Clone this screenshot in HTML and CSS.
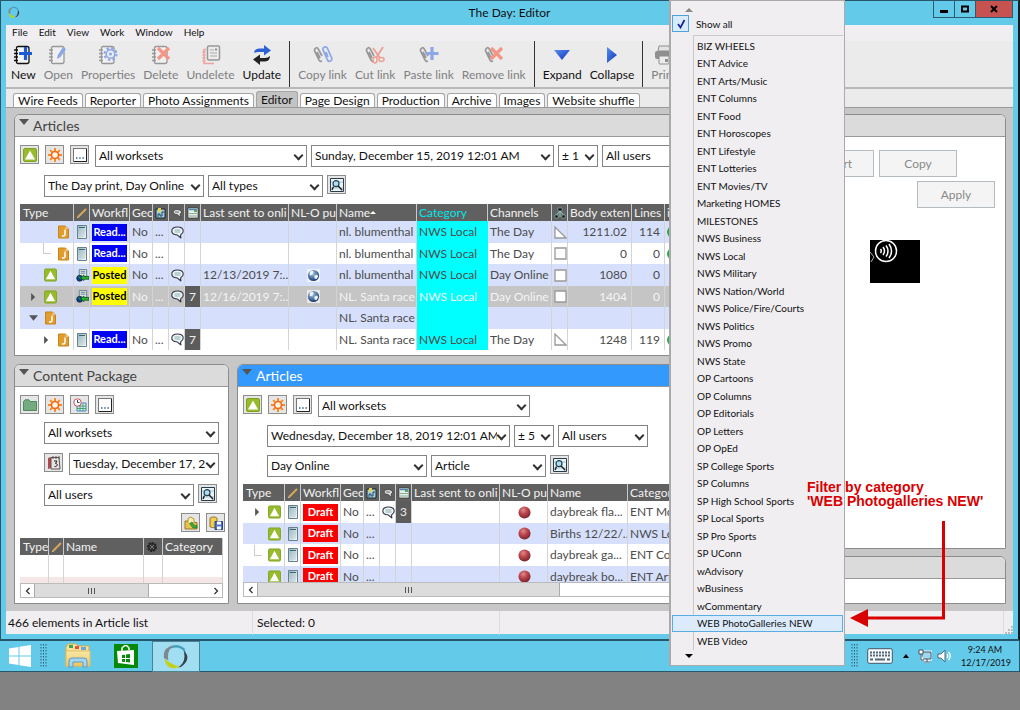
FILE: index.html
```html
<!DOCTYPE html>
<html lang="en">
<head>
	<meta charset="UTF-8">
	<meta name="viewport" content="width=device-width, initial-scale=1.0">
	<title>The Day: Editor</title>
	<link rel="stylesheet" href="styles.css">
</head>
<body>
	<!-- Icon sprite -->
	<svg class="sprite" aria-hidden="true">
		<defs>
			<linearGradient id="page-fill" x1="0" y1="0" x2="1" y2="1"><stop offset="0" stop-color="#8fb4c0"/><stop offset="1" stop-color="#fff"/></linearGradient>
			<radialGradient id="globe-fill" cx=".4" cy=".3" r=".7"><stop offset="0" stop-color="#a9cbe8"/><stop offset="1" stop-color="#16396f"/></radialGradient>
			<radialGradient id="ball-fill" cx=".4" cy=".3" r=".7"><stop offset="0" stop-color="#e08a88"/><stop offset=".5" stop-color="#b8434a"/><stop offset="1" stop-color="#7d2530"/></radialGradient>
			<linearGradient id="blue-fill" x1="0" y1="0" x2="1" y2="1"><stop offset="0" stop-color="#5b8df0"/><stop offset="1" stop-color="#0c35b8"/></linearGradient>
			<linearGradient id="folder-fill" x1="0" y1="0" x2="0" y2="1"><stop offset="0" stop-color="#f8e9a8"/><stop offset="1" stop-color="#eec65c"/></linearGradient>
		</defs>
		<symbol id="article" viewBox="0 0 14 14"><rect x=".5" y=".5" width="13" height="13" rx="1.5" fill="#97bb2d" stroke="#7fa31c"/><path d="M7 2.5 12 11.5H2z" fill="#fff"/></symbol>
		<symbol id="sun" viewBox="0 0 16 16"><g stroke="#f98b1d" stroke-width="2.2"><path d="M8 0v16M0 8h16M2.4 2.4l11.2 11.2M13.6 2.4 2.4 13.6"/></g><circle cx="8" cy="8" r="4" fill="#fdf3df" stroke="#f4661b" stroke-width="1.8"/></symbol>
		<symbol id="dots" viewBox="0 0 14 14"><rect x=".5" y=".5" width="13" height="13" fill="#fff" stroke="#777"/><path d="M13.5 1v12.5H1" fill="none" stroke="#222"/><path d="M3 10h1.5M6.2 10h1.5M9.4 10h1.5" stroke="#2b6a94" stroke-width="1.5"/></symbol>
		<symbol id="find" viewBox="0 0 14 14"><path d="M.5 .5h13v13H.5z" fill="#eaf4f8" stroke="#2a3d4a"/><path d="M1 4h12M1 10h12" stroke="#9fc1cf"/><circle cx="6" cy="5.7" r="3" fill="#b5dcea" stroke="#1e4258" stroke-width="1.2"/><path d="m8.2 8 4 4.3M3.5 8.5 2 12" stroke="#222" stroke-width="1.4"/></symbol>
		<symbol id="green-folder" viewBox="0 0 14 14"><path d="M.5 3.5 2 1.8h4l1 1.7h6.5v9H.5z" fill="#74ab80" stroke="#4e8a5d"/></symbol>
		<symbol id="schedule" viewBox="0 0 14 14"><path d="M4 5h9v8H4z" fill="#d8ecf7" stroke="#3587b5"/><path d="M4 8h9M4 10.5h9M7 6v7M10 6v7" stroke="#4da06e"/><circle cx="4.5" cy="4.5" r="3.7" fill="#fff" stroke="#d25261"/><path d="M4.500 2v2.500h2" fill="none" stroke="#345"/></symbol>
		<symbol id="calendar" viewBox="0 0 14 14"><path d="M1 2 4 1v11l-3 1z" fill="#b1484b"/><path d="M4 1.500h8l1 11.500H4z" fill="#e9e4e1" stroke="#555"/><path d="M6 0v3M9 0v3M12 0v3" stroke="#555"/><path d="M7 5h3L8.500 7.500c3 0 2 3.500-1 3" fill="none" stroke="#222"/></symbol>
		<symbol id="folder-up" viewBox="0 0 14 14"><path d="M1 5h4l1 1.500h7V13H1z" fill="#e9c34b" stroke="#99772a"/><path d="M4 7V2.500L6.500 1 10 3v4" fill="#fff0b0" stroke="#b89032"/><path d="M5.500 7.500 9 12h4V9l-2 1-3-4z" fill="#3ba83c" stroke="#1d7422" stroke-width=".6"/></symbol>
		<symbol id="save-query" viewBox="0 0 14 14"><path d="M1 2.500c0-2 7-2 7 0v8c0 1.500-7 1.500-7 0z" fill="#f0cd4e" stroke="#8c7130"/><path d="M6 5.500h7.500v8H6z" fill="#4d72c8" stroke="#26427f"/><path d="M8 5.500h4v3H8zM8 10.500h4v3H8z" fill="#fff"/></symbol>
		<symbol id="job" viewBox="0 0 12 14"><path d="M1 1h7l3 3v9H1z" fill="#e19c2e" stroke="#c98317"/><path d="M8 1v3h3" fill="#fff" opacity=".5"/><path d="M7.500 4.500v5q-.2 2-3 1.300" fill="none" stroke="#fff" stroke-width="1.500"/></symbol>
		<symbol id="page" viewBox="0 0 10 14"><path d="M.5 .5h9v13h-9z" fill="url(#page-fill)" stroke="#66808a"/><path d="M2 2.500h6" stroke="#3e6270"/><path d="M2 5h6M2 7h6M2 9h6M2 11h6" stroke="#a9bcc2" stroke-width=".6"/></symbol>
		<symbol id="sent" viewBox="0 0 14 14"><path d="M3.500 .5h8v8h-8z" fill="#dbe4e7" stroke="#66808a"/><path d="M5 2.500h5M5 4.500h5" stroke="#62808c"/><circle cx="4" cy="10" r="3.300" fill="#0a3c8a" stroke="#111" stroke-width=".6"/><path d="M2 9c2-2 2 1 3 2" stroke="#2fa75b" fill="none"/><path d="m5 9.500 3.500-3V8H14v3H8.500v1.500z" fill="#27b833" stroke="#064b0b" stroke-width=".8"/></symbol>
		<symbol id="bubble" viewBox="0 0 13 13"><path d="M6.500 1C3 1 .8 2.500.8 5S3 8.600 5.500 8.800c1 .2 2 1 4.500 3.400-.5-1.500-.6-2.700-.1-3.700 1.500-.8 2.300-2 2.300-3.500C12.200 2.500 10 1 6.500 1z" fill="#eef8fa" stroke="#334" stroke-width="1.100"/><path d="M3.500 4h6M3.500 6h6" stroke="#8aa"/></symbol>
		<symbol id="globe" viewBox="0 0 14 14"><path d="M0 0h14v14H0z" fill="#fff" opacity=".6"/><circle cx="7" cy="7" r="6" fill="url(#globe-fill)"/><path d="M3 3q3-2 4 0l-1 3-3 1zM8 7l3-1 1 2-2 3-2-1z" fill="#eef5fa"/></symbol>
		<symbol id="ball" viewBox="0 0 14 14"><circle cx="7" cy="7" r="6.500" fill="url(#ball-fill)"/></symbol>
		<symbol id="square" viewBox="0 0 13 13"><path d="M1 1h11v11H1z" fill="#fff" stroke="#999" stroke-width="1.300"/></symbol>
		<symbol id="corner" viewBox="0 0 13 13"><path d="M1 1v11h11z" fill="#fff" stroke="#999" stroke-width="1.300"/></symbol>
		<symbol id="pencil" viewBox="0 0 12 12"><path d="M2 10 10 2" stroke="#d8a65a" stroke-width="2"/><path d="m1 11 1.600-.6-1-1z" fill="#f3e5c9"/></symbol>
		<symbol id="picture" viewBox="0 0 12 12"><path d="M1 2h9v9H1z" fill="#a7cfe0" stroke="#16242c"/><path d="M3 1h3v4H3z" fill="#e7d34b"/><path d="M3 10V7h2v2h2V5h2" stroke="#1b4b66" fill="none"/></symbol>
		<symbol id="note" viewBox="0 0 12 12"><path d="M6 2.500C1 2.500 1 7.500 6 7.500l4 3-1-3.500C12 5.500 10 2.500 6 2.500z" fill="#ddd" stroke="#222" stroke-width=".6"/><path d="M4 5h4" stroke="#666"/></symbol>
		<symbol id="sheet" viewBox="0 0 12 12"><path d="M1 1h10v10H1z" fill="#e8efe9" stroke="#222" stroke-width=".6"/><path d="M2 2.500h8" stroke="#4b88c0" stroke-width="1.500"/><path d="M7 3h3v2H7z" fill="#5ca75b"/><path d="M2 6.500h8M2 9h8" stroke="#8a9"/></symbol>
		<symbol id="tree" viewBox="0 0 12 12"><path d="M4 1h4v3H4zM1 8h3v3H1zM8 8h3v3H8z" fill="#111" stroke="#9bd0cc" stroke-width=".5"/><path d="M6 4 2.500 8M6 4l3.500 4M6 4v6" stroke="#9bd0cc" fill="none"/></symbol>
		<symbol id="cog" viewBox="0 0 12 12"><circle cx="6" cy="6" r="4" fill="#333" stroke="#222" stroke-width="2" stroke-dasharray="2 1"/><path d="m4 4 4 4M8 4 4 8" stroke="#777"/></symbol>
		<symbol id="right" viewBox="0 0 8 10"><path d="M1 0 6 5 1 10z" fill="#555"/></symbol>
		<symbol id="down" viewBox="0 0 10 6"><path d="M0 0h10L5 6z" fill="#555"/></symbol>

		<!-- Toolbar -->
		<symbol id="notebook" viewBox="0 0 20 20"><path d="M5 1.500h9q2 0 2 2v13q0 2-2 2H5q-1.500 0-1.500-1.500v-14Q3.500 1.500 5 1.500z" fill="#f5f5f5" stroke="currentColor" stroke-width="1.300"/><path d="M1 5h4M1 8.500h4M1 12h4M1 15.500h4" stroke="currentColor" stroke-width="1.500"/></symbol>
		<symbol id="link" viewBox="0 0 20 20"><g fill="none" stroke="currentColor" stroke-width="1.700"><path d="M9 11 5.500 4.500Q4.500 2 3 3 .8 4 1.800 6.500l4 8q1 2.500 3.200 1.500M4 7l3 6"/></g></symbol>
		<symbol id="new" viewBox="0 0 20 20"><use href="#notebook"/><path d="M12.500 2v13M6 8.500h13" stroke="#1c5ad6" stroke-width="3.200"/></symbol>
		<symbol id="open" viewBox="0 0 20 20"><use href="#notebook"/><path d="m9 14 .8-4L15 2l3 2-5.500 8z" fill="#3f70df"/></symbol>
		<symbol id="props" viewBox="0 0 20 20"><use href="#notebook"/><circle cx="12.500" cy="9" r="6" fill="none" stroke="#3f70df" stroke-width="2" stroke-dasharray="2.500 2.200"/><circle cx="12.500" cy="9" r="4.300" fill="#e8edf8" stroke="#3f70df" stroke-width="1.500"/><circle cx="12.500" cy="9" r="1.500" fill="#3f70df"/></symbol>
		<symbol id="delete" viewBox="0 0 20 20"><use href="#notebook"/><path d="m7 3 11 11M18 3 7 14" stroke="#fa5238" stroke-width="3.200"/></symbol>
		<symbol id="undelete" viewBox="0 0 20 20"><path d="M5 4.500H3v14h10" fill="none" stroke="#f06a62" stroke-width="1.500"/><path d="M1 7h4M1 10h4M1 13h4M1 16h4" stroke="#f06a62"/><rect x="6.500" y="1" width="12" height="14" rx="1.500" fill="#eee" stroke="#555" stroke-width="1.500"/><path d="M9 5h4M9 8h7M9 11h7" stroke="#777"/><path d="M14 3.500h2v2h-2z" fill="#444"/></symbol>
		<symbol id="update" viewBox="0 0 20 20"><path d="M2 8Q2 4 7 3.500h5V0l7 5.500-7 5V7H7Q4 7 2 8z" fill="#2c62d4"/><path d="M18 11q0 5-5 5.500H8V20l-7-5.500 7-5V13h5q3 0 5-2z" fill="#222"/></symbol>
		<symbol id="copylink" viewBox="0 0 20 20"><use href="#link"/><g fill="none" stroke="#3f70df" stroke-width="1.700"><path d="m13 11-3-6Q9.500 3 11.500 2q2-.8 3 1.500l4 9q1 2.500-1 3.500t-3-1l-3-6.500M15 12l-2-5"/></g></symbol>
		<symbol id="cutlink" viewBox="0 0 20 20"><use href="#link"/><path d="m8 3 7 10M18 2l-7 11" stroke="#f4604c" stroke-width="1.800"/><ellipse cx="10" cy="15" rx="2" ry="3" fill="none" stroke="#f4604c" stroke-width="1.500"/><ellipse cx="16.500" cy="14.500" rx="2.500" ry="2" fill="none" stroke="#f4604c" stroke-width="1.500"/></symbol>
		<symbol id="pastelink" viewBox="0 0 20 20"><use href="#link"/><path d="M13 2v13M6.500 8.500h13" stroke="#3f70df" stroke-width="3.200"/></symbol>
		<symbol id="removelink" viewBox="0 0 20 20"><use href="#link"/><path d="m7 3 11 11M18 3 7 14" stroke="#fa5238" stroke-width="3.200"/></symbol>
		<symbol id="expand" viewBox="0 0 20 20"><path d="M2 5h16l-8 10z" fill="url(#blue-fill)"/></symbol>
		<symbol id="collapse" viewBox="0 0 20 20"><path d="M5 2v16l10-8z" fill="url(#blue-fill)"/></symbol>
		<symbol id="print" viewBox="0 0 20 20"><path d="M5 1h10l1 5H4z" fill="#ddd" stroke="#444"/><rect x="1" y="6" width="18" height="8" rx="2" fill="#444"/><rect x="5" y="11" width="10" height="8" rx="1" fill="#eee" stroke="#444"/><path d="M11 14h3v3h-3z" fill="#444"/></symbol>
		<symbol id="ring" viewBox="0 0 24 24"><path d="M5 6Q12-2 20 5l1 4Q14 1 5 6z" fill="#459fbd"/><path d="M19 7q8 7-2 15l-3 .5Q22 17 19 7z" fill="#37404b"/><path d="M1 14q4 4 14 8Q4 27 1 14z" fill="#c3d218"/><path d="M1 14Q-1 4 11 1.500 3 6 5 16z" fill="#7e8890"/></symbol>
		<symbol id="grip" viewBox="0 0 7 24"><path d="M1 0v24M3.500 0v24M6 0v24" stroke="#2c5e74" stroke-dasharray="1.500 1.500"/></symbol>
	</svg>

	<div class="window">
		<header class="titlebar">
			<svg class="logo"><use href="#ring"/></svg>
			<h1>The Day: Editor</h1>
			<div class="controls">
				<button aria-label="Minimize"><svg viewBox="0 0 10 10"><path d="M1 7.500h8" stroke="#000" stroke-width="3"/></svg></button>
				<button aria-label="Maximize"><svg viewBox="0 0 10 10"><path d="M2 2.500h6v5H2z" fill="none" stroke="#000" stroke-width="2"/></svg></button>
				<button class="close" aria-label="Close"><svg viewBox="0 0 10 10"><path d="m2 2 6 6M8 2 2 8" stroke="#000" stroke-width="2"/></svg></button>
			</div>
		</header>

		<main class="client">
			<nav class="menubar">
				<a href="#">File</a>
				<a href="#">Edit</a>
				<a href="#">View</a>
				<a href="#">Work</a>
				<a href="#">Window</a>
				<a href="#">Help</a>
			</nav>

			<div class="toolbar">
				<button><svg><use href="#new"/></svg>New</button>
				<button disabled><svg><use href="#open"/></svg>Open</button>
				<button disabled><svg><use href="#props"/></svg>Properties</button>
				<button disabled><svg><use href="#delete"/></svg>Delete</button>
				<button disabled><svg><use href="#undelete"/></svg>Undelete</button>
				<button><svg><use href="#update"/></svg>Update</button>
				<hr>
				<button disabled><svg><use href="#copylink"/></svg>Copy link</button>
				<button disabled><svg><use href="#cutlink"/></svg>Cut link</button>
				<button disabled><svg><use href="#pastelink"/></svg>Paste link</button>
				<button disabled><svg><use href="#removelink"/></svg>Remove link</button>
				<hr>
				<button><svg><use href="#expand"/></svg>Expand</button>
				<button><svg><use href="#collapse"/></svg>Collapse</button>
				<hr>
				<button disabled><svg><use href="#print"/></svg>Print</button>
			</div>

			<div class="tabs">
				<button>Wire Feeds</button>
				<button>Reporter</button>
				<button>Photo Assignments</button>
				<button class="active">Editor</button>
				<button>Page Design</button>
				<button>Production</button>
				<button>Archive</button>
				<button>Images</button>
				<button>Website shuffle</button>
			</div>

			<div class="workspace">
				<div class="left">
					<section class="panel top">
						<h2><svg><use href="#down"/></svg>Articles</h2>
						<div class="filters">
							<div class="row">
								<button class="tool" aria-label="Articles"><svg><use href="#article"/></svg></button>
								<button class="tool" aria-label="Highlight"><svg><use href="#sun"/></svg></button>
								<button class="tool" aria-label="More"><svg><use href="#dots"/></svg></button>
								<span class="drop workset"><select aria-label="Workset"><option>All worksets</option></select></span>
								<span class="drop date"><select aria-label="Date"><option>Sunday, December 15, 2019 12:01 AM</option></select></span>
								<span class="drop days"><select aria-label="Days"><option>± 1</option></select></span>
								<span class="drop users"><select aria-label="Users"><option>All users</option></select></span>
							</div>
							<div class="row indent">
								<span class="drop channel"><select aria-label="Channel"><option>The Day print, Day Online</option></select></span>
								<span class="drop type"><select aria-label="Type"><option>All types</option></select></span>
								<button class="tool" aria-label="Search"><svg><use href="#find"/></svg></button>
							</div>
						</div>
						<div class="grid">
							<table class="wide">
								<colgroup>
									<col class="c-type"><col class="c-icon"><col class="c-flow"><col class="c-geo"><col class="c-icon"><col class="c-icon"><col class="c-icon"><col class="c-sent"><col class="c-pub"><col class="c-name"><col class="c-cat"><col class="c-chan"><col class="c-icon"><col class="c-body"><col class="c-lines"><col>
								</colgroup>
								<thead>
									<tr><th>Type</th><th><svg><use href="#pencil"/></svg></th><th>Workfl</th><th>Geo</th><th><svg><use href="#picture"/></svg></th><th><svg><use href="#note"/></svg></th><th><svg><use href="#sheet"/></svg></th><th>Last sent to onli</th><th>NL-O pu</th><th>Name<i class="sort"></i></th><th class="hot">Category</th><th>Channels</th><th><svg><use href="#tree"/></svg></th><th>Body exten</th><th>Lines</th><th>i</th></tr>
								</thead>
								<tbody>
									<tr><td><span class="node deep"><svg class="ico"><use href="#job"/></svg></span></td><td><svg class="doc"><use href="#page"/></svg></td><td><b class="ready">Read...</b></td><td>No</td><td>...</td><td><svg><use href="#bubble"/></svg></td><td></td><td></td><td></td><td>nl. blumenthal</td><td class="cat">NWS Local</td><td>The Day</td><td><svg><use href="#corner"/></svg></td><td class="num">1211.02</td><td class="num">114</td><td><i class="dot"></i></td></tr>
									<tr><td><span class="node deep elbow"><svg class="ico"><use href="#job"/></svg></span></td><td><svg class="doc"><use href="#page"/></svg></td><td><b class="ready">Read...</b></td><td>No</td><td>...</td><td></td><td></td><td></td><td></td><td>nl. blumenthal</td><td class="cat">NWS Local</td><td>The Day</td><td><svg><use href="#square"/></svg></td><td class="num">0</td><td class="num">0</td><td><i class="dot"></i></td></tr>
									<tr><td><span class="node"><svg class="ico"><use href="#article"/></svg></span></td><td><svg><use href="#sent"/></svg></td><td><b class="posted">Posted</b></td><td>No</td><td>...</td><td><svg><use href="#bubble"/></svg></td><td></td><td>12/13/2019 7:...</td><td class="mid"><svg><use href="#globe"/></svg></td><td>nl. blumenthal</td><td class="cat">NWS Local</td><td>Day Online</td><td><svg><use href="#square"/></svg></td><td class="num">1080</td><td class="num">0</td><td></td></tr>
									<tr class="selected"><td><span class="node"><svg class="arrow"><use href="#right"/></svg><svg class="ico"><use href="#article"/></svg></span></td><td><svg><use href="#sent"/></svg></td><td><b class="posted">Posted</b></td><td>No</td><td>...</td><td><svg><use href="#bubble"/></svg></td><td class="count">7</td><td>12/16/2019 7:...</td><td class="mid"><svg><use href="#globe"/></svg></td><td>NL. Santa race</td><td class="cat">NWS Local</td><td>Day Online</td><td><svg><use href="#square"/></svg></td><td class="num">1404</td><td class="num">0</td><td></td></tr>
									<tr><td><span class="node"><svg class="arrow"><use href="#down"/></svg><svg class="ico"><use href="#job"/></svg></span></td><td></td><td></td><td></td><td></td><td></td><td></td><td></td><td></td><td>NL. Santa race</td><td class="cat"></td><td></td><td></td><td></td><td></td><td></td></tr>
									<tr><td><span class="node deep"><svg class="arrow"><use href="#right"/></svg><svg class="ico"><use href="#job"/></svg></span></td><td><svg class="doc"><use href="#page"/></svg></td><td><b class="ready">Read...</b></td><td>No</td><td>...</td><td><svg><use href="#bubble"/></svg></td><td class="count">7</td><td></td><td></td><td>NL. Santa race</td><td class="cat">NWS Local</td><td>The Day</td><td><svg><use href="#corner"/></svg></td><td class="num">1248</td><td class="num">119</td><td><i class="dot"></i></td></tr>
								</tbody>
							</table>
						</div>
					</section>

					<div class="bottom">
						<section class="panel package">
							<h2><svg><use href="#down"/></svg>Content Package</h2>
							<div class="filters">
								<div class="row short">
									<button class="tool" aria-label="Packages"><svg><use href="#green-folder"/></svg></button>
									<button class="tool" aria-label="Highlight"><svg><use href="#sun"/></svg></button>
									<button class="tool" aria-label="Schedule"><svg><use href="#schedule"/></svg></button>
									<button class="tool" aria-label="More"><svg><use href="#dots"/></svg></button>
								</div>
								<div class="row indent">
									<span class="drop fill"><select aria-label="Workset"><option>All worksets</option></select></span>
								</div>
								<div class="row indent">
									<button class="tool" aria-label="Calendar"><svg><use href="#calendar"/></svg></button>
									<span class="drop fill"><select aria-label="Date"><option>Tuesday, December 17, 2</option></select></span>
								</div>
								<div class="row indent">
									<span class="drop fill"><select aria-label="Users"><option>All users</option></select></span>
									<button class="tool" aria-label="Search"><svg><use href="#find"/></svg></button>
								</div>
								<div class="row short end">
									<button class="tool" aria-label="Import"><svg><use href="#folder-up"/></svg></button>
									<button class="tool" aria-label="Save query"><svg><use href="#save-query"/></svg></button>
								</div>
							</div>
							<div class="grid">
								<table>
									<colgroup><col class="p-type"><col class="p-icon"><col class="p-name"><col class="p-gear"><col></colgroup>
									<thead>
										<tr><th>Type</th><th><svg><use href="#pencil"/></svg></th><th>Name</th><th><svg><use href="#cog"/></svg></th><th>Category</th></tr>
									</thead>
									<tbody class="blank">
										<tr><td></td><td></td><td></td><td></td><td></td></tr>
										<tr><td></td><td></td><td></td><td></td><td></td></tr>
									</tbody>
								</table>
							</div>
							<div class="scroll">
								<button aria-label="Scroll left"><svg viewBox="0 0 8 8"><path d="M5.500 1 2.500 4l3 3" fill="none" stroke="#333" stroke-width="1.300"/></svg></button>
								<span class="thumb"></span>
								<button aria-label="Scroll right"><svg viewBox="0 0 8 8"><path d="m2.500 1 3 3-3 3" fill="none" stroke="#333" stroke-width="1.300"/></svg></button>
							</div>
						</section>

						<section class="panel focused">
							<h2><svg><use href="#down"/></svg>Articles</h2>
							<div class="filters">
								<div class="row">
									<button class="tool" aria-label="Articles"><svg><use href="#article"/></svg></button>
									<button class="tool" aria-label="Highlight"><svg><use href="#sun"/></svg></button>
									<button class="tool" aria-label="More"><svg><use href="#dots"/></svg></button>
									<span class="drop workset"><select aria-label="Workset"><option>All worksets</option></select></span>
								</div>
								<div class="row indent">
									<span class="drop date"><select aria-label="Date"><option>Wednesday, December 18, 2019 12:01 AM</option></select></span>
									<span class="drop days"><select aria-label="Days"><option>± 5</option></select></span>
									<span class="drop users"><select aria-label="Users"><option>All users</option></select></span>
								</div>
								<div class="row indent">
									<span class="drop channel"><select aria-label="Channel"><option>Day Online</option></select></span>
									<span class="drop type"><select aria-label="Type"><option>Article</option></select></span>
									<button class="tool" aria-label="Search"><svg><use href="#find"/></svg></button>
								</div>
							</div>
							<div class="grid">
								<table class="wide plain">
									<colgroup><col class="c-short"><col class="c-icon"><col class="c-flow"><col class="c-geo"><col class="c-icon"><col class="c-icon"><col class="c-icon"><col class="c-sent"><col class="c-pub"><col class="c-name"><col></colgroup>
									<thead>
										<tr><th>Type</th><th><svg><use href="#pencil"/></svg></th><th>Workfl</th><th>Geo</th><th><svg><use href="#picture"/></svg></th><th><svg><use href="#note"/></svg></th><th><svg><use href="#sheet"/></svg></th><th>Last sent to onli</th><th>NL-O pu</th><th>Name</th><th>Category</th></tr>
									</thead>
									<tbody>
										<tr><td><span class="node"><svg class="arrow"><use href="#right"/></svg><svg class="ico"><use href="#article"/></svg></span></td><td><svg class="doc"><use href="#page"/></svg></td><td><b class="draft">Draft</b></td><td>No</td><td>...</td><td><svg><use href="#bubble"/></svg></td><td class="count">3</td><td></td><td class="mid"><svg><use href="#ball"/></svg></td><td>daybreak fla...</td><td>ENT Movies/TV</td></tr>
										<tr><td><span class="node"><svg class="ico"><use href="#article"/></svg></span></td><td><svg class="doc"><use href="#page"/></svg></td><td><b class="draft">Draft</b></td><td>No</td><td>...</td><td></td><td></td><td></td><td class="mid"><svg><use href="#ball"/></svg></td><td>Births 12/22/...</td><td>NWS Local</td></tr>
										<tr><td><span class="node elbow"><svg class="ico"><use href="#article"/></svg></span></td><td><svg class="doc"><use href="#page"/></svg></td><td><b class="draft">Draft</b></td><td>No</td><td>...</td><td></td><td></td><td></td><td class="mid"><svg><use href="#ball"/></svg></td><td>daybreak ga...</td><td>ENT Columns</td></tr>
										<tr><td><span class="node"><svg class="ico"><use href="#article"/></svg></span></td><td><svg class="doc"><use href="#page"/></svg></td><td><b class="draft">Draft</b></td><td>No</td><td>...</td><td></td><td></td><td></td><td class="mid"><svg><use href="#ball"/></svg></td><td>daybreak bo...</td><td>ENT Arts/Music</td></tr>
									</tbody>
								</table>
							</div>
							<div class="scroll long">
								<button aria-label="Scroll left"><svg viewBox="0 0 8 8"><path d="M5.500 1 2.500 4l3 3" fill="none" stroke="#333" stroke-width="1.300"/></svg></button>
								<span class="thumb"></span>
							</div>
						</section>
					</div>
				</div>

				<div class="right">
					<section class="panel details">
						<h2></h2>
						<div class="actions">
							<button disabled>Revert</button>
							<button disabled>Copy</button>
						</div>
						<div class="actions last">
							<button disabled>Apply</button>
						</div>
						<svg class="preview" viewBox="0 0 50 43">
							<path d="M0 0h50v43H0z"/>
							<g fill="none" stroke="#fff"><circle cx="16" cy="11" r="10.500" stroke-width="1.500"/><path d="M10.500 9q1.500 2 0 4M13 7q3 4 0 8M16 5.500q4 5.500 0 11M19 4q5 7 0 14" stroke-width="1.500"/><path d="m0 12 4 5-3 5" stroke="#aaa"/></g>
						</svg>
					</section>
					<section class="panel extra">
						<h2></h2>
					</section>
				</div>
			</div>

			<footer class="status">
				<span>466 elements in Article list</span>
				<span>Selected: 0</span>
				<span></span>
				<svg viewBox="0 0 9 9"><path d="M7 1h2M7 4h2M4 4h2M7 7h2M4 7h2M1 7h2" stroke="#aaa" stroke-width="1.500"/></svg>
			</footer>
		</main>
	</div>

	<div class="taskbar">
		<button class="start" aria-label="Start"><svg viewBox="0 0 22 22"><path d="M0 3.500 9.500 2v8.500H0zM10.500 1.800 22 0v10.500H10.500zM0 11.500h9.500V20L0 18.500zM10.500 11.500H22V22l-11.500-1.800z" fill="#fff"/></svg></button>
		<svg class="grip"><use href="#grip"/></svg>
		<button class="app" aria-label="File Explorer"><svg viewBox="0 0 26 26"><path d="M1 4 3 1h8l2 2h11v20H1z" fill="url(#folder-fill)" stroke="#d7ab49"/><path d="M4 2h4v3H4z" fill="#38a64a"/><path d="M10 3h4v3h-4z" fill="#e05340"/><path d="M16 4h5v3h-5z" fill="#6ca6d8"/><path d="M1 8h24v15H1z" fill="url(#folder-fill)" stroke="#e2bd62"/><path d="M4 24v-6q0-3 3-3h12q3 0 3 3v6h-4v-5H8v5z" fill="#a5d6ee" stroke="#5a9cc4"/></svg></button>
		<button class="app" aria-label="Store"><svg viewBox="0 0 26 26"><path d="M1 1h24v24H1z" fill="#058a07"/><path d="m4 8 17-1v15L5 20z" fill="#fff"/><path d="M9 8V5q4-5 7 0v2" fill="none" stroke="#fff" stroke-width="1.500"/><path d="m9 12 3-.3V15H9zM13 11.500l4-.4V15h-4zM9 16h3v3l-3-.3zM13 16h4v3.500l-4-.4z" fill="#058a07"/></svg></button>
		<button class="app current" aria-label="Editor"><svg><use href="#ring"/></svg></button>
		<div class="tray">
			<svg class="grip"><use href="#grip"/></svg>
			<svg class="keyboard" viewBox="0 0 26 16"><rect x=".7" y=".7" width="24.600" height="14.600" rx="1.500" fill="#f6fbfd" stroke="#456"/><path d="M3 4.500h20M3 7.500h20" stroke="#567" stroke-width="2" stroke-dasharray="2 1"/><path d="M3 11.500h3M8 11.500h10M20 11.500h3" stroke="#567" stroke-width="2"/></svg>
			<svg class="up" viewBox="0 0 6 4"><path d="m0 4 3-4 3 4z"/></svg>
			<svg class="net" viewBox="0 0 14 14"><path d="M4 3h9v7H4zM6 13h6M9 10v3" fill="#9fd9ee" stroke="#eefaff" stroke-width="3"/><path d="M4 3h9v7H4zM6 13h6M9 10v3" fill="#9fd9ee" stroke="#456"/><path d="M1 1h4v4H1zM3 5v6h3" fill="#fff" stroke="#456"/></svg>
			<svg class="vol" viewBox="0 0 14 14"><path d="M1 5h3l4-4v12L4 9H1z" fill="#fff" stroke="#567"/><path d="M10 5q1.500 2 0 4M11.500 3q3.500 4 0 8" fill="none" stroke="#fff" stroke-width="1.300"/></svg>
			<time>9:24 AM<br>12/17/2019</time>
		</div>
	</div>

	<!-- Category filter -->
	<div class="popup">
		<svg class="more" viewBox="0 0 8 4"><path d="m0 4 4-4 4 4z" fill="#888"/></svg>
		<button class="all"><span><svg viewBox="0 0 10 10"><path d="m2 5 2.500 3.500L8.500 1" fill="none" stroke="#12239e" stroke-width="1.700"/></svg></span>Show all</button>
		<ul>
			<li><button>BIZ WHEELS</button></li>
			<li><button>ENT Advice</button></li>
			<li><button>ENT Arts/Music</button></li>
			<li><button>ENT Columns</button></li>
			<li><button>ENT Food</button></li>
			<li><button>ENT Horoscopes</button></li>
			<li><button>ENT Lifestyle</button></li>
			<li><button>ENT Lotteries</button></li>
			<li><button>ENT Movies/TV</button></li>
			<li><button>Marketing HOMES</button></li>
			<li><button>MILESTONES</button></li>
			<li><button>NWS Business</button></li>
			<li><button>NWS Local</button></li>
			<li><button>NWS Military</button></li>
			<li><button>NWS Nation/World</button></li>
			<li><button>NWS Police/Fire/Courts</button></li>
			<li><button>NWS Politics</button></li>
			<li><button>NWS Promo</button></li>
			<li><button>NWS State</button></li>
			<li><button>OP Cartoons</button></li>
			<li><button>OP Columns</button></li>
			<li><button>OP Editorials</button></li>
			<li><button>OP Letters</button></li>
			<li><button>OP OpEd</button></li>
			<li><button>SP College Sports</button></li>
			<li><button>SP Columns</button></li>
			<li><button>SP High School Sports</button></li>
			<li><button>SP Local Sports</button></li>
			<li><button>SP Pro Sports</button></li>
			<li><button>SP UConn</button></li>
			<li><button>wAdvisory</button></li>
			<li><button>wBusiness</button></li>
			<li><button>wCommentary</button></li>
			<li><button class="hover">WEB PhotoGalleries NEW</button></li>
			<li><button>WEB Video</button></li>
		</ul>
		<svg class="more" viewBox="0 0 8 4"><path d="M0 0h8L4 4z"/></svg>
	</div>

	<!-- Callout -->
	<p class="callout">Filter by category<br>'WEB Photogalleries NEW'</p>
	<svg class="pointer" viewBox="0 0 96 108"><path d="M93.500 1v97H14" fill="none" stroke="#d90000" stroke-width="3"/><path d="M0 98 18 89v18z" fill="#d90000"/></svg>
</body>
</html>
```
FILE: styles.css
```css
* {
	box-sizing: border-box;
}

body {
	position: relative;
	margin: 0;
	background: #828282;
	font-family: Lato, "Open Sans", sans-serif;
	font-size: 12px;
	line-height: 16px;
	color: #111;
}

button, select {
	font: inherit;
	color: inherit;
	margin: 0;
	padding: 0;
	border: 0;
	background: none;
}

svg {
	display: block;
	flex: none;
}

h1, h2, p, ul {
	margin: 0;
	padding: 0;
	font-weight: normal;
}

.sprite {
	position: absolute;
	width: 0;
	height: 0;
}

/* Window */
.window {
	padding: 0 5px 5px;
	border: 1px solid #28576c;
	border-right: 2px solid #0d1d26;
	background: #64cae9;
}

.titlebar {
	display: grid;
	grid-template-columns: 1fr auto 1fr;
	height: 24px;
}

.titlebar h1 {
	font-size: 12px;
	line-height: 24px;
}

.logo {
	width: 12px;
	height: 12px;
	margin: 5px 2px;
}

.controls {
	display: flex;
	justify-self: end;
	height: 17px;
	border: 1px solid #2b5c72;
	border-top: 0;
}

.controls button {
	width: 21px;
	display: grid;
	place-items: center;
	border-right: 1px solid #2b5c72;
}

.controls svg {
	width: 10px;
	height: 10px;
}

.controls .close {
	width: 36px;
	border: 0;
	background: #c6534f;
}

.menubar {
	display: flex;
	gap: 11px;
	height: 16px;
	padding-left: 6px;
	background: #f0eef1;
	font-size: 10px;
	line-height: 15px;
}

.menubar a {
	color: #111;
	text-decoration: none;
}

.toolbar {
	display: flex;
	gap: 8px;
	height: 48px;
	padding-left: 5px;
	overflow: hidden;
	border-bottom: 2px solid #b9b9b9;
	background: #ebebeb;
}

.toolbar button {
	display: flex;
	flex-direction: column;
	align-items: center;
	gap: 2px;
	padding-top: 4px;
	white-space: nowrap;
}

.toolbar svg {
	width: 20px;
	height: 20px;
}

.toolbar button:disabled {
	color: #808080;
}

.toolbar button:disabled svg {
	opacity: .55;
	color: #555;
}

.toolbar hr {
	width: 1px;
	margin: 0;
	border: 0;
	background: #333;
}

.tabs {
	display: flex;
	align-items: end;
	gap: 2px;
	height: 18px;
	padding-left: 7px;
	background: #ebebeb;
}

.tabs button {
	height: 14px;
	padding: 0 4px;
	border: 1px solid #a5a5a5;
	border-bottom: 0;
	border-radius: 3px 3px 0 0;
	background: #fff;
	line-height: 12px;
	white-space: nowrap;
}

.tabs .active {
	height: 16px;
	background: #c3c3c3;
}

/* Panels */
.workspace {
	display: flex;
	gap: 8px;
	padding: 6px 7px 7px 8px;
	border-top: 1px solid #999;
	background: #c7c7c7;
}

.left {
	flex: 7 1 0;
	min-width: 0;
	display: flex;
	flex-direction: column;
	gap: 8px;
}

.right {
	flex: 3 1 0;
	display: flex;
	flex-direction: column;
	gap: 7px;
}

.bottom {
	display: flex;
	gap: 8px;
}

.panel {
	min-width: 0;
	overflow: hidden;
	border: 1px solid #8b8b8b;
	border-radius: 6px 6px 0 0;
	background: #fff;
}

.panel h2 {
	display: flex;
	gap: 4px;
	height: 22px;
	padding-left: 4px;
	border-bottom: 1px solid #999;
	background: #dbdbdb;
	color: #444;
	font-size: 14px;
	line-height: 22px;
}

.panel h2 svg {
	width: 10px;
	height: 6px;
	margin-top: 4px;
}

.panel.top {
	padding-bottom: 5px;
}

.package {
	flex: 0 0 215px;
}

.focused {
	flex: 1;
}

.focused h2 {
	background: #3399fd;
	color: #fff;
}

.details {
	flex: 1;
}

.extra {
	height: 48px;
}

.filters {
	display: flex;
	flex-direction: column;
	gap: 8px;
	padding: 8px 9px 7px 5px;
}

.package .filters {
	gap: 9px;
}

.row {
	display: flex;
	gap: 4px;
	height: 22px;
}

.indent {
	padding-left: 24px;
}

.short {
	height: 18px;
}

.end {
	justify-content: end;
	margin-right: -8px;
	margin-top: -2px;
}

.tool {
	flex: none;
	display: grid;
	place-items: center;
	width: 19px;
	height: 19px;
	margin-right: 2px;
	border: 1px solid #8d8d8d;
	background: #e6e6e6;
}

.tool svg {
	width: 14px;
	height: 14px;
}

.drop {
	flex: none;
	position: relative;
	display: flex;
}

.drop::after {
	content: "";
	position: absolute;
	right: 5px;
	top: 7px;
	width: 5px;
	height: 5px;
	border: solid #333;
	border-width: 0 2px 2px 0;
	transform: rotate(45deg);
	pointer-events: none;
}

.drop select {
	appearance: none;
	width: 100%;
	padding: 0 12px 0 3px;
	border: 1px solid #848484;
	border-radius: 0;
	background: #fff;
	text-overflow: clip;
}

.workset { width: 212px; }
.date { width: 243px; }
.days { width: 40px; }
.users { width: 90px; }
.channel { width: 160px; }
.type { width: 115px; }
.fill { flex: 1; min-width: 0; }

/* Tables */
.grid {
	overflow: hidden;
	margin: 0 5px;
}

.bottom .grid {
	height: 98px;
}

.package .grid {
	height: 45px;
}

table {
	width: 100%;
	table-layout: fixed;
	border-spacing: 0;
	color: #4c4c4c;
}

th, td {
	padding: 0 0 0 2px;
	overflow: hidden;
	white-space: nowrap;
	text-align: left;
	font-weight: normal;
	border-right: 1px solid #d4d4d4;
}

th {
	height: 17px;
	border-right-color: #c9c9c9;
	background: #606060;
	color: #f2f2f2;
}

th:first-child {
	padding-left: 3px;
}

th svg {
	width: 12px;
	height: 12px;
}

td {
	height: 22px;
}

tr:nth-child(even) td {
	height: 21px;
}

td svg {
	width: 13px;
	height: 13px;
}

tbody tr:nth-child(odd), .plain tbody tr:nth-child(even) {
	background: #d6e0fc;
}

.plain tbody tr:nth-child(odd), .blank tr:nth-child(odd) {
	background: #fff;
}

.blank tr:nth-child(even) {
	background: #f5e6e8;
}

.c-type { width: 54px; }
.c-short { width: 42px; }
.c-icon { width: 16px; }
.c-flow { width: 40px; }
.c-geo { width: 23px; }
.c-sent { width: 88px; }
.c-pub { width: 48px; }
.c-name { width: 80px; }
.c-cat { width: 71px; }
.c-chan { width: 64px; }
.c-body { width: 64px; }
.c-lines { width: 33px; }
.p-type { width: 29px; }
.p-icon { width: 15px; }
.p-name { width: 80px; }
.p-gear { width: 19px; }

.hot {
	color: #00e5e5;
}

.sort {
	display: inline-block;
	margin-bottom: 3px;
	border: 3px solid transparent;
	border-top: 0;
	border-bottom-color: #fff;
}

tbody .cat {
	background: #00ffff;
	border-color: #00ffff;
}

tbody .selected {
	background: #c5c5c5;
	color: #f4f4f4;
}

.num {
	padding-right: 4px;
	text-align: right;
}

.mid svg {
	margin: 0 auto;
}

.count, .selected .count {
	background: #5c5c5c;
	color: #eee;
	text-align: center;
	padding: 0;
}

td b {
	display: block;
	height: 17px;
	margin-right: 2px;
	font-size: 11px;
	line-height: 16px;
	text-align: center;
}

.ready { background: #0000f5; color: #fff; }
.posted { background: #ffff00; color: #000; }
.draft { background: #fb0000; color: #fff; }

.dot {
	display: block;
	width: 12px;
	height: 12px;
	border-radius: 50%;
	background: #2fa84b;
}

.doc {
	width: 10px;
	height: 14px;
	margin-left: 1px;
}

.node {
	display: flex;
	align-items: center;
	justify-content: end;
	gap: 6px;
	padding-right: 16px;
}

.wide .deep, .plain .node {
	padding-right: 3px;
}

.node .arrow {
	width: 9px;
	height: 8px;
}

.node .ico {
	width: 13px;
	height: 14px;
}

.elbow::before {
	content: "";
	width: 7px;
	height: 10px;
	margin-bottom: 10px;
	border: solid #ccc;
	border-width: 0 0 1px 1px;
}

/* Scrollbars */
.scroll {
	display: flex;
	height: 15px;
	margin: 0 5px 5px;
	border: 1px solid #bbb;
	background: #fff;
}

.scroll button {
	width: 13px;
	display: grid;
	place-items: center;
}

.scroll button:last-child {
	margin-left: auto;
}

.scroll svg {
	width: 8px;
	height: 8px;
}

.thumb {
	flex: 0 0 57%;
	display: grid;
	place-items: center;
	border: solid #aaa;
	border-width: 0 1px;
	background: #dcdcdc;
}

.thumb::before {
	content: "";
	width: 7px;
	height: 6px;
	background: repeating-linear-gradient(90deg, #555 0 1px, transparent 1px 3px);
}

.long .thumb {
	flex-basis: 67%;
}

/* Details panel */
.actions {
	display: flex;
	justify-content: end;
	gap: 5px;
	padding: 13px 48px 4px 0;
}

.actions.last {
	padding: 0 10px 0 0;
}

.actions button {
	width: 78px;
	height: 27px;
	border: 1px solid #b4bcc2;
	background: #f4f4f4;
	color: #8a8a8a;
}

.preview {
	width: 50px;
	height: 43px;
	margin: 32px 85px 0 auto;
}

.status {
	display: grid;
	grid-template-columns: 247px 247px 1fr auto;
	height: 23px;
	background: #f0eef1;
	line-height: 24px;
}

.status span {
	padding-left: 4px;
	border-right: 1px solid #ddd;
}

.status span:first-child {
	padding-left: 2px;
}

.status svg {
	width: 9px;
	height: 9px;
	align-self: end;
}

/* Taskbar */
.taskbar {
	display: flex;
	align-items: center;
	height: 32px;
	border: solid #28576c;
	border-width: 1px 1px 1px 0;
	background: #64cae9;
}

.start {
	width: 40px;
	padding-left: 9px;
}

.start svg {
	width: 22px;
	height: 22px;
}

.grip {
	width: 7px;
	height: 24px;
}

.app {
	display: grid;
	place-items: center;
	width: 48px;
	height: 31px;
}

.app svg {
	width: 26px;
	height: 26px;
}

.grip + .app {
	margin-left: 7px;
}

.current {
	margin-left: 2px;
	border: 1px solid #4a8298;
	background: #a2def1;
}

.tray {
	display: flex;
	align-items: center;
	margin-left: auto;
	padding-right: 10px;
}

.keyboard {
	width: 26px;
	height: 16px;
	margin: 0 10px 0 9px;
}

.up {
	width: 6px;
	height: 4px;
	margin-right: 9px;
}

.net, .vol {
	width: 14px;
	height: 14px;
	margin-right: 5px;
}

.tray time {
	width: 48px;
	margin-left: 5px;
	font-size: 9px;
	line-height: 13px;
	text-align: center;
	white-space: nowrap;
}

/* Category popup */
.popup {
	position: absolute;
	left: 669px;
	top: 0;
	width: 176px;
	padding: 7px 1px;
	border: 1px solid #aaa;
	border-width: 1px 1px 1px 2px;
	background: #f0eef1;
	font-size: 10px;
}

.more {
	width: 8px;
	height: 4px;
	margin-left: 13px;
}

.all {
	display: flex;
	align-items: center;
	gap: 7px;
	height: 17px;
	margin-top: 3px;
}

.all span {
	display: grid;
	place-items: center;
	width: 17px;
	height: 17px;
	border: 1px solid #4fa3d8;
	background: #d9ebfb;
}

.all svg {
	width: 10px;
	height: 10px;
}

.popup ul {
	margin: 3px 0 4px;
	padding: 2px 0 0;
	list-style: none;
	background: linear-gradient(#c9c9c9, #c9c9c9) 21px 0 / 1px 100% no-repeat;
}

.popup ul::before {
	content: "";
	display: block;
	height: 1px;
	margin: -2px 0 1px 22px;
	background: #c9c9c9;
}

.popup li button {
	display: block;
	width: 100%;
	height: 18px;
	padding-left: 24px;
	border: 1px solid transparent;
	line-height: 15px;
	text-align: left;
	white-space: nowrap;
}

.popup li:nth-child(even) button {
	height: 17px;
}

.popup .hover {
	border-color: #5aade0;
	background: #dcebfc;
}

/* Callout */
.callout {
	position: absolute;
	left: 807px;
	top: 480px;
	color: #d90000;
	font: bold 14px/14px "Liberation Sans", Arial, sans-serif;
	white-space: nowrap;
}

.pointer {
	position: absolute;
	left: 850px;
	top: 520px;
	width: 96px;
	height: 108px;
}
```
